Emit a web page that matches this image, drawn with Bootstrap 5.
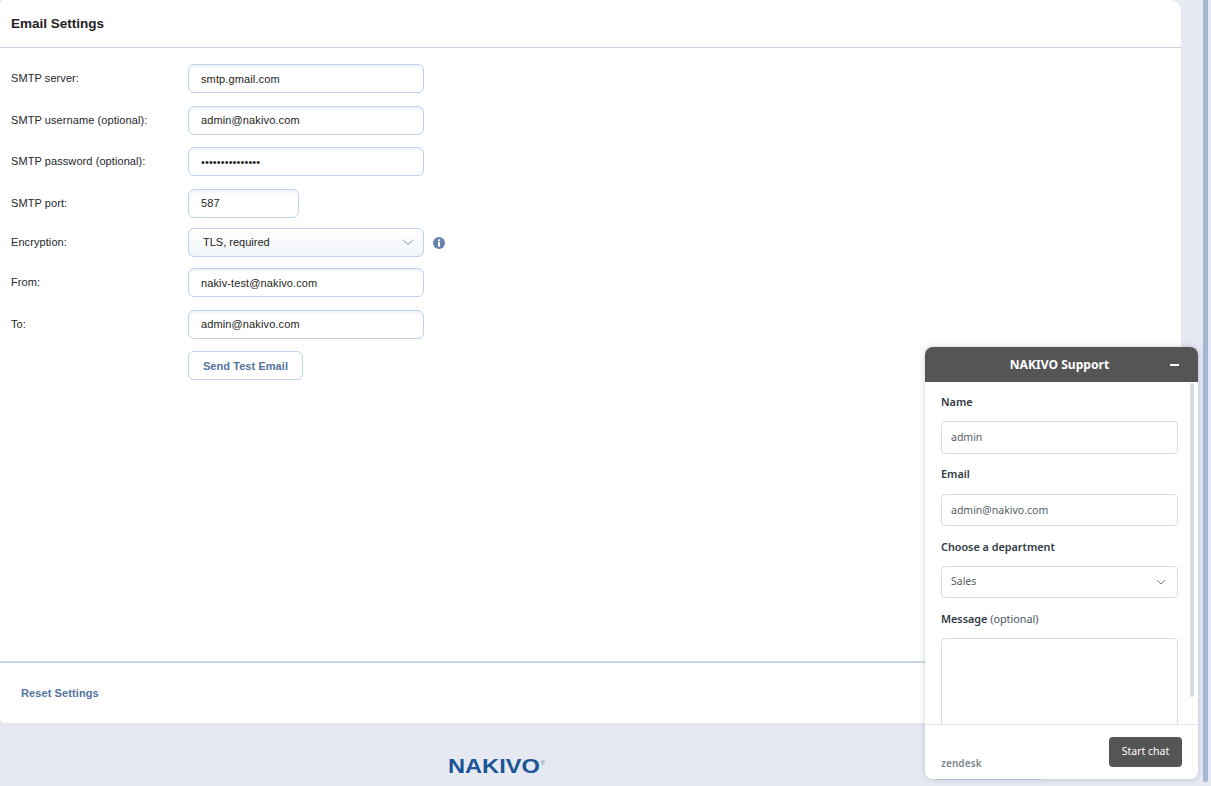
<!DOCTYPE html>
<html lang="en">
<head>
<meta charset="utf-8">
<title>Email Settings</title>
<link href="https://cdn.jsdelivr.net/npm/bootstrap@5.3.0/dist/css/bootstrap.min.css" rel="stylesheet">
<style>
html,body{height:786px;overflow:hidden}
body{background:#e6e9f2;font-family:"Liberation Sans",Arial,sans-serif;font-size:11px;color:#222;position:relative}
.shell{height:786px}
.mainwrap{width:1181px}
.rail{width:5px;height:782px;background:#a3b7d3;margin-left:22px;border-radius:0 0 3px 3px}
.panel{height:723px;border:0;border-radius:4px 10px 5px 5px;background:#fff}
.panel-head{height:48px;background:transparent;border-bottom:1px solid #c8d2e0;padding:0 11px;border-radius:4px 10px 0 0!important}
.panel-head h1{font-size:13.5px;font-weight:700;margin:0;color:#1f2024;line-height:47px}
.panel-body{padding:16px 11px 0;flex:1}
.frow{height:29px;margin-bottom:13px}
.frow.g12{margin-bottom:12px}
.frow.g10{margin-bottom:10px}
.frow.g11{margin-bottom:11px}
.flabel{width:177px;font-size:11px;color:#26272b;line-height:29px;flex:none;letter-spacing:.08px}
.nk-input{width:236px;height:29px;font-size:11px;padding:0 12px;color:#1d1e22;border:1px solid #c1d2e8;border-radius:6px;box-shadow:inset 0 2px 3px rgba(160,180,215,.18);font-family:inherit;letter-spacing:.12px}
.nk-input.up{padding-bottom:2px}
.nk-input.short{width:111px}
.nk-input.pw{letter-spacing:.1px;font-size:11px}
.nk-select{width:236px;height:29px;font-size:11px;padding:0 12px 0 14px;color:#1d1e22;border:1px solid #c1d2e8;border-radius:6px;font-family:inherit;
background-color:#fff;background-image:url("data:image/svg+xml,%3Csvg xmlns='http://www.w3.org/2000/svg' width='12' height='7' viewBox='0 0 12 7'%3E%3Cpath d='M1 1l5 4.5L11 1' fill='none' stroke='%23a9bcd6' stroke-width='1.2'/%3E%3C/svg%3E"),linear-gradient(#fff,#f1f4f9);background-repeat:no-repeat;background-position:right 9px center,0 0;background-size:12px 7px,100% 100%}
.info-ic{margin-left:9px;flex:none}
.nk-btn{height:29px;width:115px;font-size:11px;font-weight:700;padding:1px 0 0;color:#5273a0;background:#fff;border:1px solid #c1d2e8;border-radius:6px;font-family:inherit;letter-spacing:.06px}
.panel-foot{height:62px;background:transparent;border-top:2px solid #cbd7e6;padding:0 21px;border-radius:0 0 5px 5px!important}
.reset-link{font-size:11px;font-weight:700;color:#5273a0;text-decoration:none;letter-spacing:.1px}
.pagefoot{height:63px;padding:28px 135px 6px 448px}
.brand{font-size:21px;font-weight:700;color:#1b5596;line-height:15px;font-family:"Liberation Sans",Arial,sans-serif;transform:scaleX(1.125);transform-origin:left center}
.brand sup{font-size:5.5px;font-weight:400;top:-1.5em;margin-left:.5px;color:#6f8fb5}
.ghost-btn{width:115px;height:29px;background:#fff;border:1px solid #c1d2e8;border-radius:6px}
.chat{position:absolute;left:925px;top:347px;width:273px;height:432px;background:#fff;border-radius:8px;box-shadow:0 0 6px rgba(40,50,70,.22);font-family:"Noto Sans",sans-serif;overflow:hidden;color:#2f3941}
.chat-head{height:35px;background:#555;color:#fff;font-size:12.1px;font-weight:700;position:relative;line-height:35px;text-align:center;padding-right:4px}
.chat-min{position:absolute;right:19px;top:17px;width:9px;height:1.5px;background:#fff}
.chat-scroll{flex:1;min-height:0;overflow:hidden;padding:0 20px 0 16px;position:relative}
.chat-thumb{position:absolute;right:4px;top:1px;width:4px;height:314px;background:#d8dce1;border-radius:2px}
.chat-label{font-size:10.8px;font-weight:600;line-height:16px;display:block;margin:0 0 11px;color:#2f3941}
.chat-label.wide{margin-bottom:12px}
.chat-label span{font-weight:400;color:#49545c}
.chat-input{height:32px;font-size:10.5px;padding:0 9px 1px;color:#555e66;border:1px solid #d8dcde;border-radius:4px;font-family:inherit;margin-bottom:13px}
.chat-input.first{height:33px;padding-bottom:2px;margin-bottom:12px}
.chat-select{height:32px;font-size:10.5px;padding:0 9px;color:#555e66;border:1px solid #d8dcde;border-radius:4px;font-family:inherit;margin-bottom:13px;
background-image:url("data:image/svg+xml,%3Csvg xmlns='http://www.w3.org/2000/svg' width='10' height='6' viewBox='0 0 10 6'%3E%3Cpath d='M.8 1l4.2 4L9.2 1' fill='none' stroke='%2368737d' stroke-width='.9'/%3E%3C/svg%3E");background-position:right 11px center;background-size:10px 6px}
.chat-area{height:110px;border:1px solid #d8dcde;border-radius:4px;resize:none;font-family:inherit}
.chat-foot{height:55px;border-top:1px solid #e4e6e8;padding:12px 16px 0;background:#fff;flex:none}
.chat-brand{font-size:10px;font-weight:600;color:#7a848c;margin-top:20px;letter-spacing:.1px;line-height:12px}
.chat-btn{height:30px;width:73px;background:#555;color:#fff;font-size:10.5px;border:0;border-radius:4px;padding:0;font-family:inherit}
</style>
</head>
<body>
<div class="shell d-flex align-items-start">
  <div class="mainwrap d-flex flex-column">
    <section class="card panel">
      <div class="card-header panel-head"><h1>Email Settings</h1></div>
      <form class="panel-body">
        <div class="frow d-flex"><label class="flabel" for="f1">SMTP server:</label><input id="f1" class="form-control nk-input" value="smtp.gmail.com"></div>
        <div class="frow g12 d-flex"><label class="flabel" for="f2">SMTP username (optional):</label><input id="f2" class="form-control nk-input up" value="admin@nakivo.com"></div>
        <div class="frow d-flex"><label class="flabel" for="f3">SMTP password (optional):</label><input id="f3" type="password" class="form-control nk-input pw" value="nakivopassword1"></div>
        <div class="frow g10 d-flex"><label class="flabel" for="f4">SMTP port:</label><input id="f4" class="form-control nk-input short up" value="587"></div>
        <div class="frow g11 d-flex align-items-center"><label class="flabel" for="f5">Encryption:</label><select id="f5" class="form-select nk-select"><option>TLS, required</option></select>
          <svg class="info-ic" width="12" height="12" viewBox="0 0 12 12" aria-hidden="true"><circle cx="6" cy="6" r="6" fill="#6583ab"/><rect x="5" y="5" width="2" height="4.6" fill="#fff"/><rect x="5" y="2.4" width="2" height="1.8" fill="#fff"/></svg></div>
        <div class="frow d-flex"><label class="flabel" for="f6">From:</label><input id="f6" class="form-control nk-input" value="nakiv-test@nakivo.com"></div>
        <div class="frow g12 d-flex"><label class="flabel" for="f7">To:</label><input id="f7" class="form-control nk-input up" value="admin@nakivo.com"></div>
        <div class="frow d-flex"><span class="flabel"></span><button type="button" class="btn nk-btn">Send Test Email</button></div>
      </form>
      <div class="card-footer panel-foot d-flex align-items-center"><a href="#" class="reset-link">Reset Settings</a></div>
    </section>
    <footer class="pagefoot d-flex align-items-center justify-content-between">
      <div class="brand">NAKIVO<sup>®</sup></div>
      <div class="ghost-btn"></div>
    </footer>
  </div>
  <div class="rail"></div>
</div>

<aside class="chat d-flex flex-column">
  <div class="chat-head">NAKIVO Support<span class="chat-min"></span></div>
  <div class="chat-scroll">
    <div class="chat-thumb"></div>
    <label class="chat-label mt-2 pt-1">Name</label>
    <input class="form-control chat-input first" value="admin">
    <label class="chat-label wide">Email</label>
    <input class="form-control chat-input" value="admin@nakivo.com">
    <label class="chat-label">Choose a department</label>
    <select class="form-select chat-select"><option>Sales</option></select>
    <label class="chat-label">Message <span>(optional)</span></label>
    <textarea class="form-control chat-area"></textarea>
  </div>
  <div class="chat-foot d-flex justify-content-between align-items-start">
    <div class="chat-brand">zendesk</div>
    <button type="button" class="btn chat-btn">Start chat</button>
  </div>
</aside>
<script src="https://cdn.jsdelivr.net/npm/bootstrap@5.3.0/dist/js/bootstrap.bundle.min.js"></script>
</body>
</html>
